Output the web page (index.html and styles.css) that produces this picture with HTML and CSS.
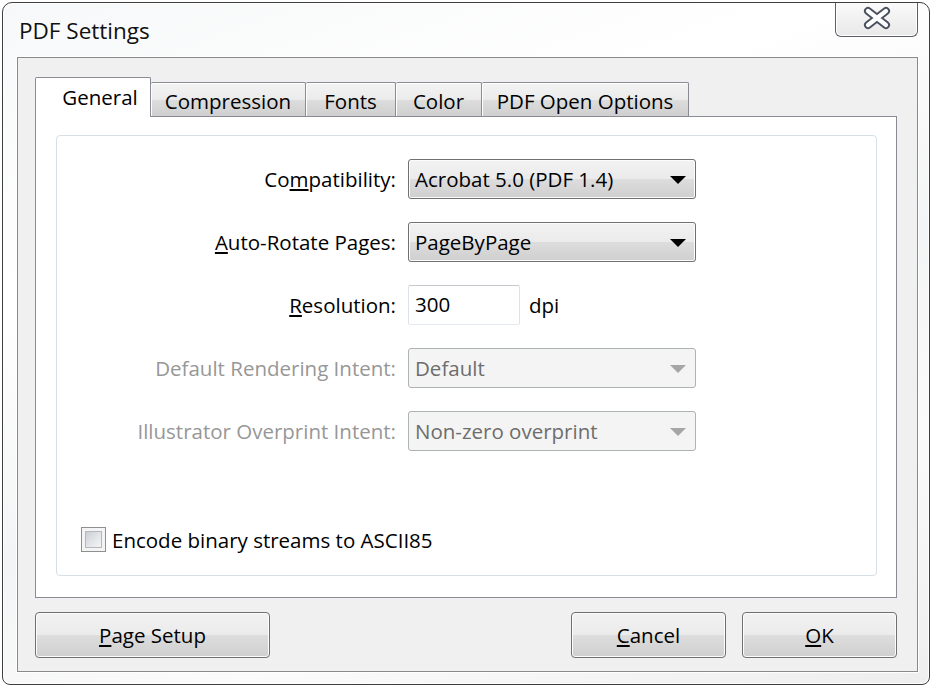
FILE: index.html
```html
<!DOCTYPE html>
<html lang="en">
<head>
<meta charset="utf-8">
<title>PDF Settings</title>
<link rel="stylesheet" href="styles.css">
</head>
<body>
<div class="window">
  <div class="titlebar">
    <div class="title">PDF Settings</div>
    <div class="close-btn">
      <svg width="30" height="24" viewBox="0 0 30 24">
        <path d="M6 5 L24 19 M24 5 L6 19" stroke="#4a5060" stroke-width="8" stroke-linecap="round" fill="none"/>
        <path d="M6 5 L24 19 M24 5 L6 19" stroke="#ffffff" stroke-width="4.2" stroke-linecap="round" fill="none"/>
      </svg>
    </div>
  </div>
  <div class="client">
    <div class="tabs">
      <div class="tab tab-active tab-general">General</div>
      <div class="tab tab-compression">Compression</div>
      <div class="tab tab-fonts">Fonts</div>
      <div class="tab tab-color">Color</div>
      <div class="tab tab-open">PDF Open Options</div>
    </div>
    <div class="panel">
      <div class="group">
        <div class="form">
          <div class="label">Co<u>m</u>patibility:</div>
          <div class="select"><span class="value">Acrobat 5.0 (PDF 1.4)</span><span class="arrow"></span></div>
          <div></div>

          <div class="label"><u>A</u>uto-Rotate Pages:</div>
          <div class="select"><span class="value">PageByPage</span><span class="arrow"></span></div>
          <div></div>

          <div class="label"><u>R</u>esolution:</div>
          <div class="res-cell"><div class="textbox">300</div><span class="unit">dpi</span></div>
          <div></div>

          <div class="label disabled">Default Rendering Intent:</div>
          <div class="select select-disabled"><span class="value">Default</span><span class="arrow"></span></div>
          <div></div>

          <div class="label disabled">Illustrator Overprint Intent:</div>
          <div class="select select-disabled"><span class="value">Non-zero overprint</span><span class="arrow"></span></div>
          <div></div>
        </div>
        <div class="check-row">
          <span class="checkbox"><span class="checkbox-inner"></span></span>
          <span class="check-label">Encode binary streams to ASCII85</span>
        </div>
      </div>
    </div>
    <div class="buttons">
      <div class="btn btn-wide"><u>P</u>age Setup</div>
      <div class="spacer"></div>
      <div class="btn"><u>C</u>ancel</div>
      <div class="btn"><u>O</u>K</div>
    </div>
  </div>
</div>
</body>
</html>
```
FILE: styles.css
```css
* { box-sizing: border-box; }

html, body {
  margin: 0;
  padding: 0;
  background: #ffffff;
}

body {
  font-family: "Open Sans", "Noto Sans", "DejaVu Sans", sans-serif;
  font-size: 20.5px;
  color: #000;
  width: 934px;
  height: 688px;
  overflow: hidden;
}

u { text-decoration-thickness: 1.5px; text-underline-offset: 2px; }

.window {
  margin: 2px 0 0 2px;
  width: 928px;
  height: 683px;
  border: 1px solid #3e3e3e;
  border-radius: 10px 10px 8px 8px;
  background: linear-gradient(160deg, #f7f8f9 0%, #ffffff 30%, #f3f4f5 55%, #fbfbfb 75%, #eeeeee 100%);
  box-shadow: inset 0 0 0 1px #ffffff;
  padding: 0 11px 12px 14px;
  display: flex;
  flex-direction: column;
}

.titlebar {
  height: 54px;
  display: flex;
  justify-content: space-between;
  align-items: flex-start;
}

.title {
  padding: 14px 0 0 2px;
  font-size: 22.5px;
  line-height: 28px;
  color: #111;
  text-shadow: 0 0 6px #ffffff;
}

.close-btn {
  width: 83px;
  height: 34px;
  border: 1px solid #5c5f66;
  border-top: none;
  border-radius: 0 0 6px 6px;
  background: linear-gradient(#fafafa, #f1f1f1 50%, #e9e9e9 100%);
  box-shadow: inset 0 -1px 0 #ffffff, inset 1px 0 0 #ffffff, inset -1px 0 0 #ffffff;
  display: flex;
  align-items: center;
  justify-content: center;
  padding-bottom: 3px;
}

.client {
  flex: 1;
  border: 1px solid #8a8a8a;
  box-shadow: 0 0 0 1px #ffffff;
  background: #f0f0f0;
  padding: 19px 20px 13px 17px;
  display: flex;
  flex-direction: column;
}

.tabs {
  height: 39px;
  display: flex;
  align-items: flex-end;
}

.tab {
  height: 34px;
  border: 1px solid #898c95;
  border-bottom: none;
  border-left: none;
  border-radius: 2px 2px 0 0;
  background: linear-gradient(#f3f3f3 0%, #ebebeb 50%, #dddddd 51%, #cfcfcf 100%);
  box-shadow: inset 1px 1px 0 #ffffff;
  line-height: 34px;
  padding-top: 1px;
  text-align: center;
  white-space: nowrap;
}

.tab-general { width: 116px; }
.tab-compression { width: 155px; }
.tab-fonts { width: 90px; }
.tab-color { width: 86px; }
.tab-open { width: 207px; }

.tab-active {
  height: 40px;
  margin-bottom: -1px;
  padding: 0 0 0 14px;
  border-left: 1px solid #898c95;
  border-right: 1px solid #898c95;
  background: #ffffff;
  box-shadow: none;
  line-height: 38px;
  position: relative;
  z-index: 1;
}

.panel {
  flex: 1;
  background: #ffffff;
  border: 1px solid #898c95;
  padding: 18px 19px 21px 20px;
  display: flex;
  flex-direction: column;
}

.group {
  flex: 1;
  border: 1px solid #d5dfe5;
  border-radius: 4px;
  padding: 23px 0 23px 0;
  display: flex;
  flex-direction: column;
}

.form {
  display: grid;
  grid-template-columns: 339px 288px 1fr;
  column-gap: 12px;
  row-gap: 23px;
  align-items: center;
}

.label {
  text-align: right;
  white-space: nowrap;
  line-height: 24px;
}

.label.disabled { color: #979797; }

.select {
  height: 40px;
  border: 1px solid #707070;
  border-radius: 3px;
  background: linear-gradient(#f2f2f2 0%, #ebebeb 50%, #dddddd 51%, #cfcfcf 100%);
  box-shadow: inset 0 0 0 1px #fcfcfc;
  display: flex;
  align-items: center;
  justify-content: space-between;
  padding: 0 9px 0 6px;
}

.value { white-space: nowrap; line-height: 24px; }

.arrow {
  width: 0;
  height: 0;
  border-left: 8px solid transparent;
  border-right: 8px solid transparent;
  border-top: 8px solid #000;
  margin-top: 1px;
}

.select-disabled {
  border-color: #adb2b5;
  background: #f4f4f4;
  box-shadow: none;
}

.select-disabled .value { color: #6d6d6d; }
.select-disabled .arrow { border-top-color: #a6a6a6; }

.res-cell {
  display: flex;
  align-items: center;
  gap: 9px;
}

.textbox {
  width: 112px;
  height: 40px;
  border: 1px solid;
  border-color: #c4c8cd #dde2e8 #e3e9ef #dde2e8;
  border-radius: 2px;
  background: #fff;
  padding: 0 6px;
  line-height: 37px;
}

.unit { line-height: 24px; }

.check-row {
  margin-top: auto;
  display: flex;
  align-items: center;
  padding-left: 24px;
  gap: 6px;
}

.checkbox {
  width: 25px;
  height: 25px;
  border: 1px solid #8e8f8f;
  background: #f4f4f4;
  padding: 3px;
  display: flex;
}

.checkbox-inner {
  flex: 1;
  border: 1px solid #b4b8bd;
  background: linear-gradient(135deg, #cbcfd5 0%, #e3e5e8 55%, #f4f4f4 100%);
}

.check-label { line-height: 24px; white-space: nowrap; }

.buttons {
  margin-top: 14px;
  height: 46px;
  display: flex;
  gap: 16px;
}

.spacer { flex: 1; }

.btn {
  width: 155px;
  height: 46px;
  border: 1px solid #707070;
  border-radius: 4px;
  background: linear-gradient(#f2f2f2 0%, #ebebeb 50%, #dddddd 51%, #cfcfcf 100%);
  box-shadow: inset 0 0 0 1px #fcfcfc;
  display: flex;
  align-items: center;
  justify-content: center;
  line-height: 24px;
}

.btn-wide { width: 235px; }
```
